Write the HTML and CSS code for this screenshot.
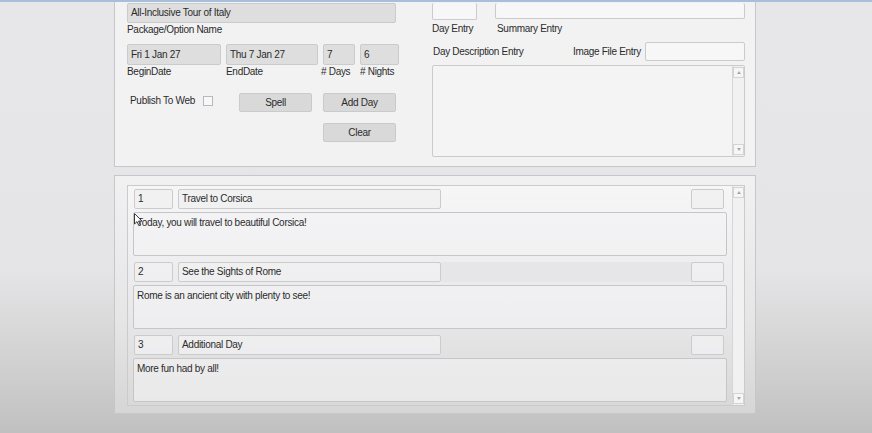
FILE: index.html
```html
<!DOCTYPE html>
<html>

<head>
    <meta http-equiv="Content-Type" content="text/html; charset=utf-8" />
    <title>Package Editor</title>
    <link rel="stylesheet" href="styles.css">
</head>

<body>
    <div class="window">
        <div class="panel panel_top">
            <div class="col_left">
                <div class="field dim name">All-Inclusive Tour of Italy</div>
                <div class="label">Package/Option Name</div>

                <div class="dates">
                    <div class="field dim">Fri 1 Jan 27</div>
                    <div class="field dim">Thu 7 Jan 27</div>
                    <div class="field dim">7</div>
                    <div class="field dim">6</div>
                    <div class="label">BeginDate</div>
                    <div class="label">EndDate</div>
                    <div class="label shift">#&nbsp;Days</div>
                    <div class="label">#&nbsp;Nights</div>
                </div>

                <div class="actions">
                    <div class="publish">Publish To Web <span class="check"></span></div>
                    <button class="btn">Spell</button>
                    <button class="btn add">Add Day</button>
                </div>
                <div class="actions_2">
                    <button class="btn">Clear</button>
                </div>
            </div>

            <div class="col_right">
                <div class="entry_row">
                    <div class="field light day_box"></div>
                    <div class="field light summary_box"></div>
                </div>
                <div class="entry_labels">
                    <div class="label">Day Entry</div>
                    <div class="label">Summary Entry</div>
                </div>
                <div class="desc_row">
                    <div class="label grow">Day Description Entry</div>
                    <div class="label">Image File Entry</div>
                    <div class="field light image_box"></div>
                </div>
                <div class="textarea">
                    <div class="scroll">
                        <span class="arrow up"></span>
                        <span class="arrow down"></span>
                    </div>
                </div>
            </div>
        </div>

        <div class="panel panel_bottom">
            <div class="list">
                <div class="rows">
                    <div class="day">
                        <div class="day_head">
                            <div class="field num">1</div>
                            <div class="field title">Travel to Corsica</div>
                            <div class="field pic"></div>
                        </div>
                        <div class="field text">Today, you will travel to beautiful Corsica!
                            <svg class="pointer" width="9" height="14" viewBox="0 0 9 14">
                                <path d="M0.5 0.5 L0.5 11 L3 8.6 L4.8 12.6 L6.3 12 L4.6 8.1 L8 8.1 Z" fill="#fff" stroke="#222" stroke-width="0.9" stroke-linejoin="round" />
                            </svg>
                        </div>
                    </div>
                    <div class="day sel">
                        <div class="day_head">
                            <div class="field num">2</div>
                            <div class="field title">See the Sights of Rome</div>
                            <div class="field pic"></div>
                        </div>
                        <div class="field text">Rome is an ancient city with plenty to see!</div>
                    </div>
                    <div class="day">
                        <div class="day_head">
                            <div class="field num">3</div>
                            <div class="field title">Additional Day</div>
                            <div class="field pic"></div>
                        </div>
                        <div class="field text">More fun had by all!</div>
                    </div>
                </div>
                <div class="scroll">
                    <span class="arrow up"></span>
                    <span class="arrow down"></span>
                </div>
            </div>
        </div>
    </div>
</body>

</html>
```

FILE: styles.css
```css
* {
    margin: 0;
    padding: 0;
    box-sizing: border-box;
}

body {
    height: 433px;
    overflow: hidden;
    border-top: 2px solid #a6c0dc;
    background: linear-gradient(#e7e7e9 0%, #e5e5e7 62%, #cdcdcd 88%, #c0c0c0 100%);
    font: 10px/14px "Liberation Sans", Arial, sans-serif;
    letter-spacing: -0.3px;
    color: #2b2b2b;
}

.window {
    margin-left: 114px;
    width: 642px;
}

.panel {
    border: 1px solid #c7c7c9;
}

/* upper editing panel */
.panel_top {
    border-top: none;
    background: #f2f2f3;
    display: flex;
    padding: 1px 10px 9px 12px;
}

.col_left {
    width: 274px;
}

.col_right {
    width: 313px;
    margin-left: 31px;
}

.field {
    border: 1px solid #cbcbcd;
    border-radius: 2px;
    padding: 0 3px;
    white-space: nowrap;
    overflow: hidden;
}

.dim {
    background: #dedede;
    line-height: 19px;
}

.light {
    background: #f7f7f8;
}

.name {
    width: 269px;
    height: 20px;
    line-height: 18px;
}

.label {
    line-height: 14px;
}

.dates {
    margin-top: 7px;
    display: grid;
    grid-template-columns: 94px 92px 32px 39px;
    column-gap: 5px;
}

.dates .field {
    height: 21px;
}

.dates .shift {
    margin-left: -2px;
}

.actions {
    margin-top: 14px;
    display: flex;
    align-items: flex-start;
}

.publish {
    width: 112px;
    padding-left: 3px;
    padding-top: 1px;
    display: flex;
    align-items: center;
    line-height: 14px;
}

.check {
    display: inline-block;
    width: 10px;
    height: 10px;
    margin-left: 8px;
    border: 1px solid #b9b9bb;
    background: #f8f8f8;
}

.btn {
    width: 73px;
    height: 19px;
    border: 1px solid #cacacc;
    border-radius: 2px;
    background: #d9d9da;
    font: inherit;
    letter-spacing: inherit;
    color: #2b2b2b;
}

.btn.add {
    margin-left: 11px;
}

.actions_2 {
    margin-top: 11px;
    padding-left: 196px;
}

.entry_row {
    display: flex;
    align-items: flex-start;
}

.day_box {
    width: 45px;
    height: 17px;
    border-top: none;
}

.summary_box {
    width: 250px;
    height: 16px;
    margin-left: 18px;
    border-top: none;
}

.entry_labels {
    display: flex;
    margin-top: 2px;
}

.entry_labels .label:first-child {
    width: 65px;
}

.desc_row {
    margin-top: 6px;
    display: flex;
    align-items: center;
    height: 19px;
}

.grow {
    flex: 1;
    padding-left: 1px;
    padding-top: 1px;
}

.image_box {
    width: 100px;
    height: 19px;
    margin-left: 4px;
}

.textarea {
    margin-top: 4px;
    height: 92px;
    border: 1px solid #cbcbcd;
    border-radius: 2px;
    background: #f4f4f5;
    display: flex;
    justify-content: flex-end;
}

/* scrollbar strip */
.scroll {
    width: 12px;
    border-left: 1px solid #d6d6d8;
    background: #f1f1f2;
    display: flex;
    flex-direction: column;
    justify-content: space-between;
    padding: 1px 0;
}

.arrow {
    height: 11px;
    border: 1px solid #d4d4d6;
    background: #f6f6f7;
    position: relative;
}

.arrow:after {
    content: "";
    position: absolute;
    left: 3px;
    top: 3px;
    border-left: 2px solid transparent;
    border-right: 2px solid transparent;
}

.arrow.up:after {
    border-bottom: 3px solid #a8a8aa;
}

.arrow.down:after {
    border-top: 3px solid #a8a8aa;
}

/* day list */
.panel_bottom {
    margin-top: 8px;
    padding: 9px 10px 7px 12px;
    background: linear-gradient(#f1f1f2, #e6e6e7 60%, #d6d6d6);
}

.list {
    height: 221px;
    border: 1px solid #cbcbcd;
    display: flex;
    background: linear-gradient(#f6f6f7, #e9e9eb 55%, #d9d9d9);
}

.rows {
    flex: 1;
    padding: 3px 5px 1px 5px;
}

.day {
    margin-bottom: 6px;
}

.day:last-child {
    margin-bottom: 0;
}

.day_head {
    display: flex;
    padding: 0 3px 0 1px;
}

.sel .day_head {
    background: linear-gradient(90deg, transparent 308px, #e6e6e8 308px, #e6e6e8 559px, transparent 559px);
}

.day_head .field {
    height: 20px;
    line-height: 18px;
    background: rgba(240, 240, 241, 0.8);
}

.num {
    width: 39px;
}

.title {
    width: 263px;
    margin-left: 5px;
}

.pic {
    width: 33px;
    margin-left: auto;
}

.text {
    position: relative;
    margin-top: 3px;
    height: 44px;
    padding-top: 3px;
    line-height: 14px;
    background: rgba(244, 244, 245, 0.6);
    border-color: #c6c6c8;
}

.pointer {
    position: absolute;
    left: 0;
    top: 0;
}
```
